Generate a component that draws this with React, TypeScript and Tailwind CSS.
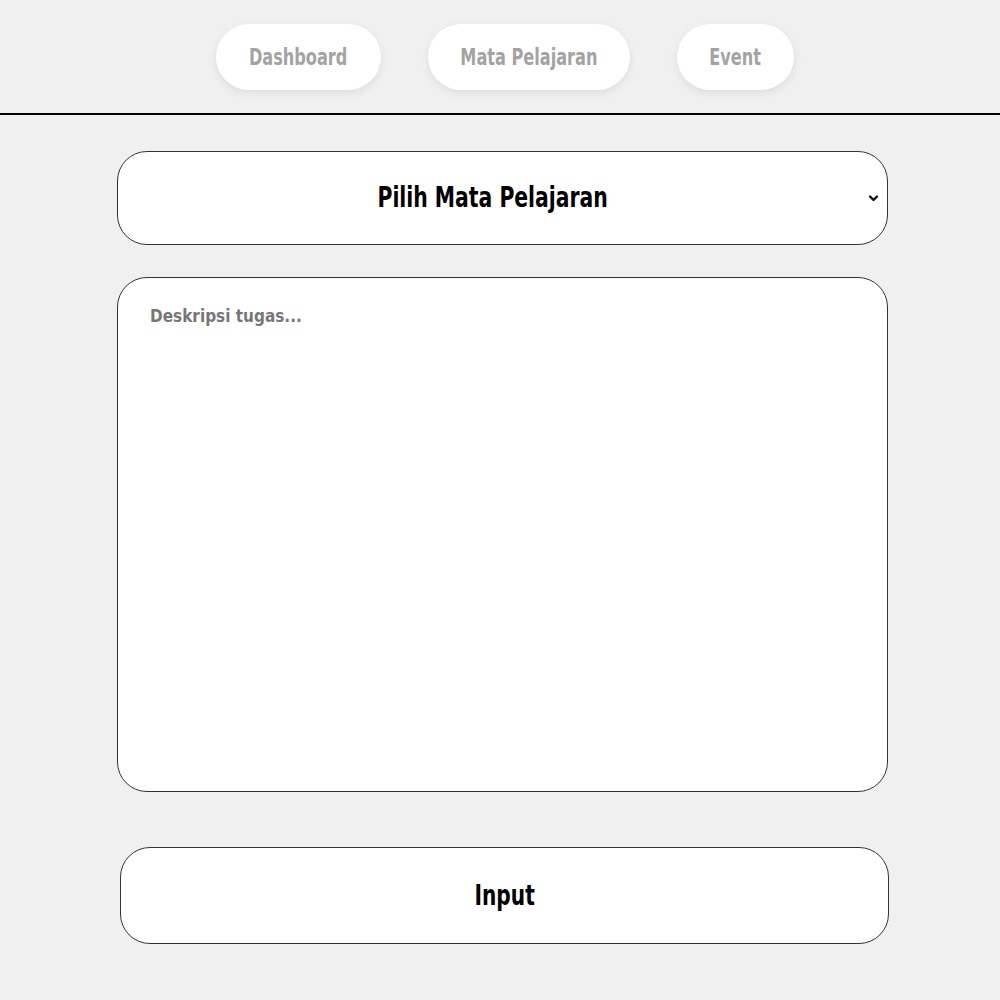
import { useState } from 'react';
import { Listbox, ListboxButton, ListboxOption, ListboxOptions } from '@headlessui/react';

const font = "font-['DejaVu_Sans_Condensed','DejaVu_Sans',sans-serif]";

const navItems = [
  { label: 'Dashboard', width: 'w-[165px]' },
  { label: 'Mata Pelajaran', width: 'w-[202px]' },
  { label: 'Event', width: 'w-[117px]' },
];

const mapelList = ['Matematika', 'Bahasa Indonesia', 'IPA', 'IPS'];

export default function App() {
  const [mapel, setMapel] = useState('');
  const [desc, setDesc] = useState('');

  return (
    <div className={`min-h-[1000px] bg-[#f0f0f0] ${font}`}>
      {/* Navbar */}
      <nav className="flex h-[115px] justify-center gap-[47px] border-b-2 border-black pl-[9px] pt-[24px]">
        {navItems.map((item) => (
          <a
            key={item.label}
            href="#"
            className={`flex h-[66px] ${item.width} items-center justify-center whitespace-nowrap rounded-full bg-white text-[23px] font-bold text-[#a3a3a3] shadow-[0_3px_8px_rgba(0,0,0,0.08)]`}
          >
            <span className="inline-block scale-x-[0.78]">{item.label}</span>
          </a>
        ))}
      </nav>

      {/* Form */}
      <form className="flex flex-col pl-[117px] pr-[112px] pt-[36px]" onSubmit={(e) => e.preventDefault()}>
        <Listbox value={mapel} onChange={setMapel}>
          <div className="relative">
            <ListboxButton className="flex h-[94px] w-full items-center rounded-[30px] border border-[#333] bg-white text-[29px] font-bold text-black outline-none">
              <span className="flex flex-1 justify-center">
                <span className="inline-block scale-x-[0.78] whitespace-nowrap">{mapel || 'Pilih Mata Pelajaran'}</span>
              </span>
              <span className="flex w-[20px] pl-[1px]">
                <svg
                  className="h-[10px] w-[11px]"
                  viewBox="0 0 11 10"
                  fill="none"
                  stroke="#111"
                  strokeWidth="2.4"
                  strokeLinecap="round"
                  strokeLinejoin="round"
                >
                  <path d="M2 3.5 5.5 7 9 3.5" />
                </svg>
              </span>
            </ListboxButton>
            <ListboxOptions className="absolute left-0 right-0 top-full z-10 mt-1 rounded-xl border border-[#333] bg-white py-1 text-lg font-bold">
              {mapelList.map((m) => (
                <ListboxOption key={m} value={m} className="cursor-pointer px-6 py-2 data-[focus]:bg-gray-100">
                  {m}
                </ListboxOption>
              ))}
            </ListboxOptions>
          </div>
        </Listbox>

        <textarea
          value={desc}
          onChange={(e) => setDesc(e.target.value)}
          placeholder="Deskripsi tugas..."
          className="mt-[32px] h-[515px] w-full resize-none rounded-[30px] border border-[#333] bg-white px-[32px] pt-[26px] text-[17px] font-bold leading-normal text-black outline-none placeholder:text-[#777]"
        />

        <button
          type="submit"
          className="ml-[3px] mt-[55px] h-[97px] w-[769px] rounded-[30px] border border-[#333] bg-white text-[28px] font-bold text-black"
        >
          <span className="inline-block scale-x-[0.8]">Input</span>
        </button>
      </form>
    </div>
  );
}
